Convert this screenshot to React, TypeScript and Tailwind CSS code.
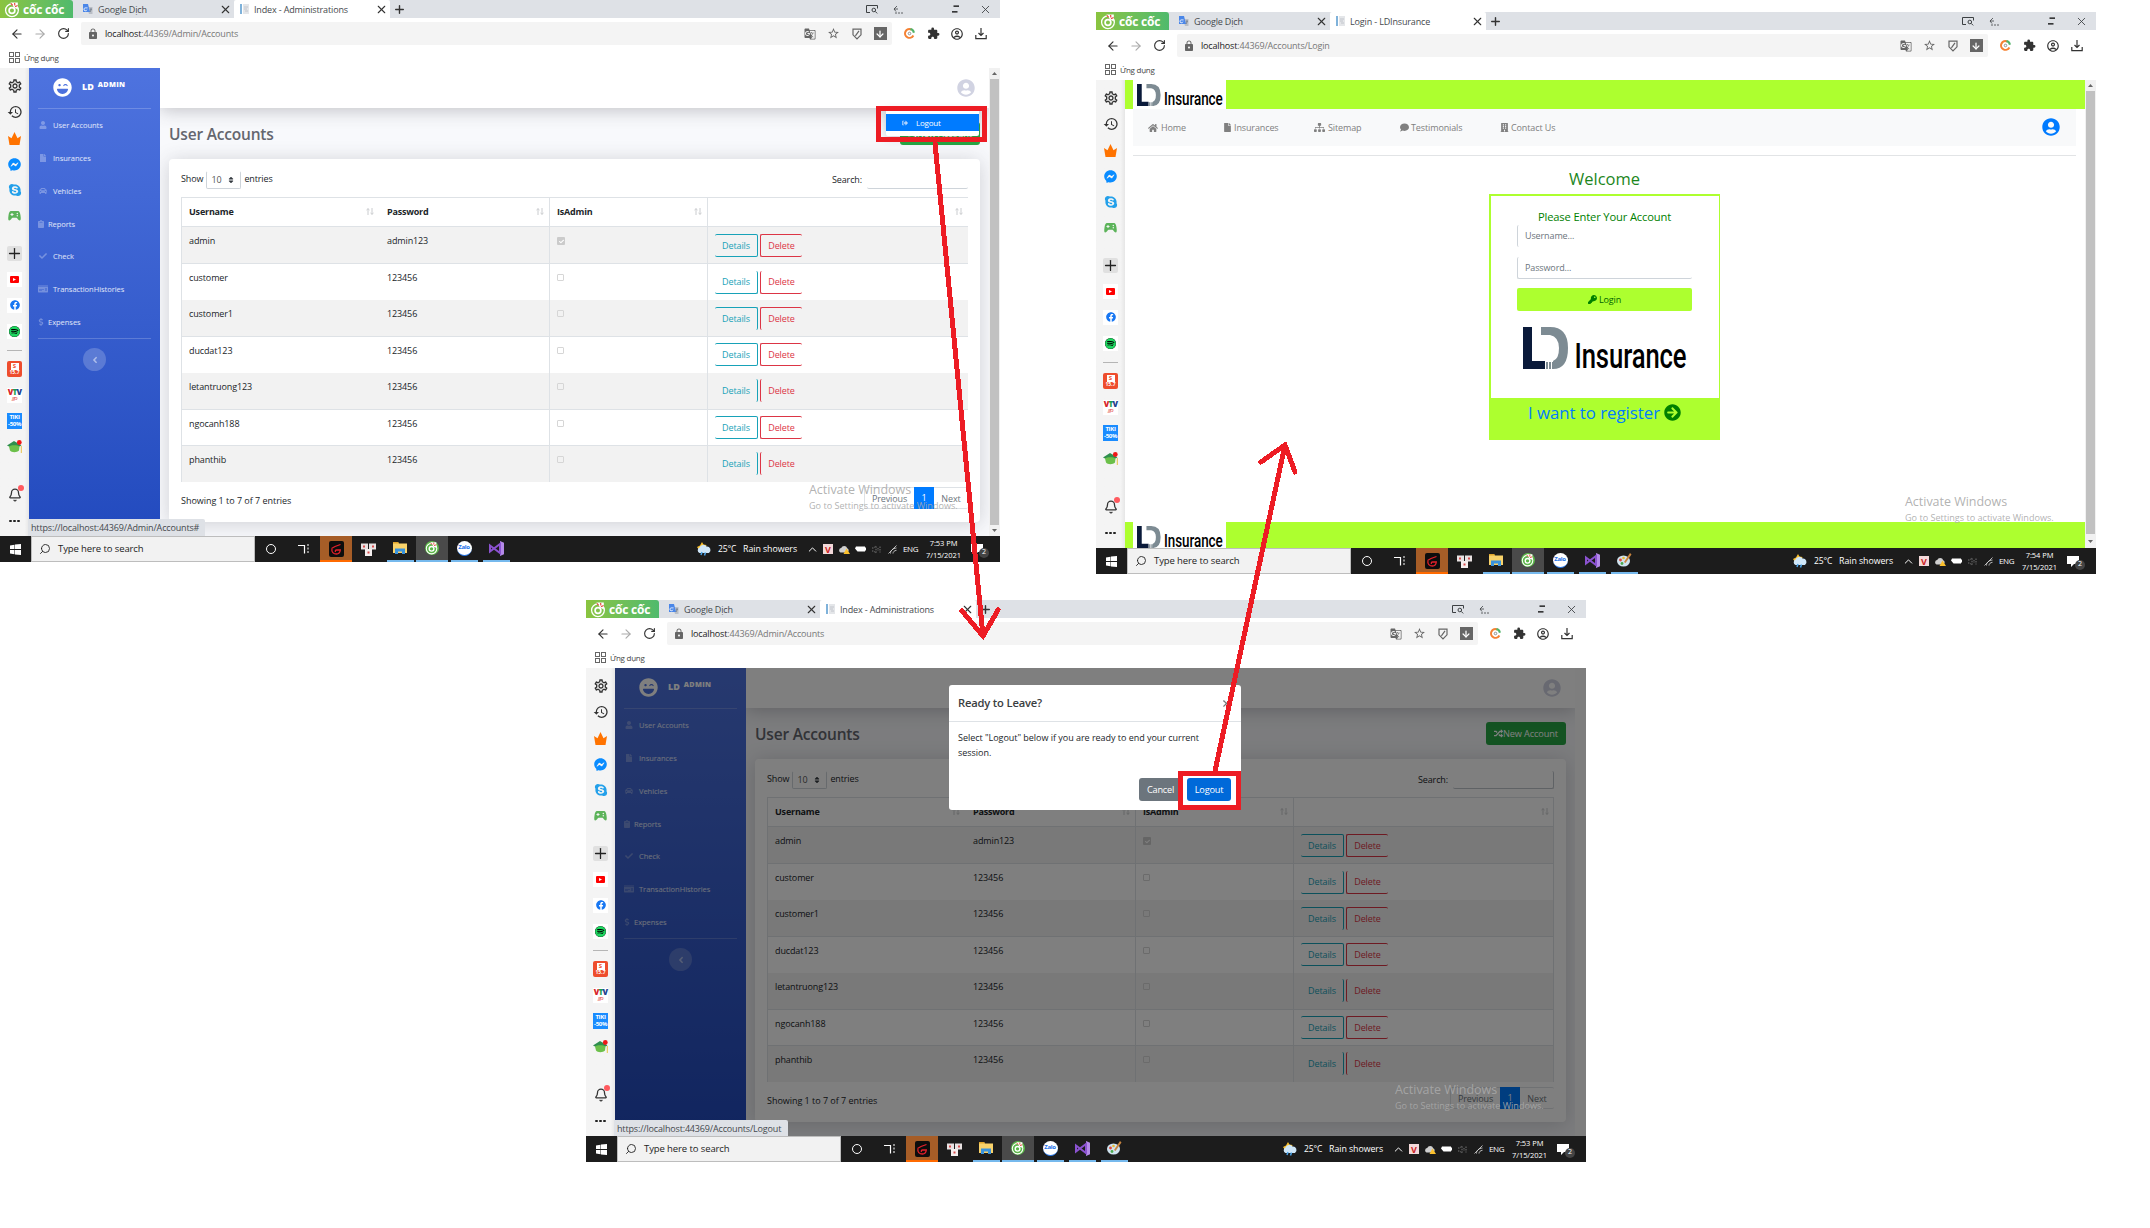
import React from 'react';
import {
  FaLaughWink, FaUser, FaFile, FaCar, FaClipboard, FaCheck, FaDollarSign, FaMoneyCheck, FaAngleLeft,
  FaUserCircle, FaSignOutAlt, FaHome, FaSitemap, FaComment, FaBuilding, FaKey, FaArrowCircleRight,
  FaRandom, FaSort, FaFacebook, FaFacebookMessenger, FaSkype, FaSpotify,
} from 'react-icons/fa';
import {
  MdOutlineSettings, MdHistory, MdLock, MdStarBorder, MdExtension, MdGTranslate, MdOutlineAccountCircle,
} from 'react-icons/md';
import { ArrowLeft, ArrowRight, RotateCw, Plus, X, Bell, Search, ArrowDown, ChevronUp } from 'lucide-react';

/* ---------- Browser chrome ---------- */

function CocCocMark({ size }: { size: number }) {
  return (
    <svg width={size} height={size} viewBox="0 0 16 16">
      <circle cx="7.5" cy="8.7" r="6" fill="none" stroke="#fff" strokeWidth="1.2" />
      <circle cx="7.5" cy="8.9" r="2.7" fill="none" stroke="#fff" strokeWidth="1.6" />
      <path d="M6 1.500h7V8L9.500 6z" fill="#fff" />
      <path d="M6.500 2.200l1.700 2M10 1.800l.2 2.400M12.800 4.200l-2.400 1.200" stroke="#e4483c" strokeWidth="1.1" />
    </svg>
  );
}

function TabBar({ title }: { title: string }) {
  return (
    <div className="flex h-[18px] bg-[#dee1e6] text-[9px] tracking-[-0.15px] text-[#45494d]">
      <div className="flex w-[73px] items-center rounded-tr-[3px] bg-gradient-to-r from-[#8ac43f] to-[#4fba6c] pl-[4px] text-white">
        <CocCocMark size={17} />
        <span className="ml-[2px] mt-[1px] text-[12px] font-bold leading-none tracking-[-0.2px] whitespace-nowrap">cốc cốc</span>
      </div>
      <div className="flex w-[161px] items-center pl-[10px]">
        <svg width="10" height="10" viewBox="0 0 10 10">
          <path d="M4 3h5.5v7H6z" fill="#b9bec6" />
          <path d="M0 0h5l2 8H0z" fill="#4a86e8" />
          <path d="M4.6 3.9H2.9a1.5 1.5 0 101 1.8" fill="none" stroke="#fff" strokeWidth=".8" />
          <path d="M7 5h2M8 5v1L7 8" stroke="#5f6b7a" strokeWidth=".7" fill="none" />
        </svg>
        <span className="mt-px ml-[5px]">Google Dịch</span>
        <X className="mr-[2px] ml-auto" size={13} strokeWidth={2} color="#333" />
      </div>
      <div className="flex w-[156px] items-center rounded-t-[2px] bg-white pl-[6px]">
        <svg width="9" height="10" viewBox="0 0 9 10">
          <path d="M0 0h2v10H0z" fill="#7fb2da" />
          <path d="M3 0h6v10H3z" fill="#e4e6e9" />
          <path d="M4 3h4M4 5h3M5 7h3" stroke="#b9bdc4" strokeWidth=".8" />
        </svg>
        <span className="mt-px ml-[5px]">{title}</span>
        <X className="mr-[2px] ml-auto" size={13} strokeWidth={2} color="#333" />
      </div>
      <div className="flex w-[18px] items-center justify-center"><Plus size={13} strokeWidth={2.6} color="#333" /></div>
      <div className="ml-auto flex text-[#3c4043]">
        <div className="flex w-[26px] items-center justify-center">
          <svg width="12" height="10" viewBox="0 0 12 10" fill="none" stroke="currentColor" strokeWidth="1">
            <path d="M4 8.5H.5v-7h11v3" /><circle cx="7.8" cy="6" r="1.8" /><path d="M9.2 7.4l2 2" />
          </svg>
        </div>
        <div className="flex w-[26px] items-center justify-center">
          <svg width="10" height="9" viewBox="0 0 10 9" fill="none" stroke="currentColor" strokeWidth=".8">
            <path d="M4 1L1 4l2 2.500M1 4h4" /><path d="M2 8h8" strokeDasharray="2 1" />
          </svg>
        </div>
        <div className="ml-[29px] flex w-[30px] items-center justify-center">
          <svg width="7" height="8" viewBox="0 0 7 8"><path d="M1.5 1.2H7M0 6.8h5.5" stroke="#000" strokeWidth="1.2" /></svg>
        </div>
        <div className="flex w-[30px] items-center justify-center"><X size={13} strokeWidth={1.6} /></div>
      </div>
    </div>
  );
}

function Toolbar({ path }: { path: string }) {
  return (
    <div className="flex h-[31px] items-center bg-white pl-[5px] text-[#333]">
      <div className="flex w-[23px] justify-center"><ArrowLeft size={14} strokeWidth={1.900} /></div>
      <div className="flex w-[23px] justify-center text-[#aaa]"><ArrowRight size={14} strokeWidth={1.900} /></div>
      <div className="flex w-[24px] justify-center"><RotateCw size={13} strokeWidth={2.1} /></div>
      <div className="ml-[6px] flex h-[23px] w-[811px] items-center rounded-[2px] bg-[#f4f4f4] pl-[6px] text-[#666]">
        <MdLock size={12} />
        <span className="ml-[6px] text-[9px] tracking-[-0.16px] text-[#777]"><span className="text-[#222]">localhost</span>:44369{path}</span>
        <div className="ml-auto flex items-center">
          <div className="flex w-[23.4px] justify-center"><MdGTranslate size={12} /></div>
          <div className="flex w-[23.4px] justify-center"><MdStarBorder size={13} /></div>
          <div className="flex w-[23.4px] justify-center">
            <svg width="10" height="12" viewBox="0 0 10 12" fill="none" stroke="currentColor" strokeWidth="1.2">
              <path d="M1 1.2h8v5.600L5 11 1 6.800zM3.400 7.800l3.600-5" />
            </svg>
          </div>
          <div className="flex w-[23.4px] justify-center">
            <div className="flex size-[13px] items-center justify-center bg-[#666] text-white"><ArrowDown size={10} strokeWidth={3} /></div>
          </div>
        </div>
      </div>
      <div className="ml-[5px] flex items-center">
        <div className="flex w-6 justify-center">
          <svg width="11" height="11" viewBox="0 0 12 12" fill="none" strokeWidth="2.200">
            <path d="M8 1.600A4.800 4.800 0 1 0 10.200 8.200" stroke="#f58233" />
            <path d="M7 1.200a4.800 4.800 0 0 1 3.800 4" stroke="#51b36a" />
            <circle cx="6" cy="6" r="1.400" stroke="#888" strokeWidth="1" />
          </svg>
        </div>
        <div className="flex w-6 justify-center"><MdExtension size={13} /></div>
        <div className="flex w-6 justify-center"><MdOutlineAccountCircle size={14} /></div>
        <div className="flex w-6 justify-center">
          <svg width="12" height="12" viewBox="0 0 12 12" fill="none" stroke="currentColor" strokeWidth="1.200"><path d="M6 0v7M3.500 5L6 7.500 8.500 5M.8 7v3.700h10.400V7" /></svg>
        </div>
      </div>
    </div>
  );
}

function Bookmarks() {
  return (
    <div className="flex h-[19px] items-center bg-white pb-[3px] pl-[9px]">
      <div className="grid grid-cols-2 gap-[1px]">
        <i className="size-[5px] border border-[#666]" /><i className="size-[5px] border border-[#666]" />
        <i className="size-[5px] border border-[#666]" /><i className="size-[5px] border border-[#666]" />
      </div>
      <span className="mt-px ml-[4px] text-[8px] tracking-[-0.25px] text-[#444]">Ứng dụng</span>
    </div>
  );
}

function Cell({ children }: { children: React.ReactNode }) {
  return <div className="flex h-[26px] w-[29px] shrink-0 items-center justify-center">{children}</div>;
}

function Tile({ children }: { children: React.ReactNode }) {
  return <div className="flex size-[15px] items-center justify-center bg-white">{children}</div>;
}

function AppStrip() {
  return (
    <div className="flex w-[29px] shrink-0 flex-col bg-gradient-to-r from-[#f4f4f4] from-85% to-[#e6e6e6] pt-[5px] text-[#333]">
      <Cell><MdOutlineSettings size={16} /></Cell>
      <Cell><MdHistory size={16} /></Cell>
      <Cell><svg width="13" height="13" viewBox="0 0 13 13"><path d="M0 4l3.500 2.200L6.500 0l3 6.200L13 4l-1.500 9h-10z" fill="#ff7300" /></svg></Cell>
      <Cell><FaFacebookMessenger size={13} color="#0a8cff" /></Cell>
      <Cell><FaSkype size={14} color="#23a0ea" /></Cell>
      <Cell>
        <svg width="13" height="10" viewBox="0 0 13 10">
          <path d="M3 0h7c1.400 0 2.100 1.600 2.500 4.400.5 3.500.4 5.100-.9 5.100S9.400 7 8.500 6.800h-4C3.600 7 2.700 9.500 1.400 9.500S0 7.900.5 4.400C.9 1.600 1.600 0 3 0z" fill="#5cb35a" />
          <path d="M2.500 3.500h3M4 2v3" stroke="#f4f4f4" /><circle cx="9.300" cy="2.500" r=".7" fill="#f4f4f4" /><circle cx="9.300" cy="4.800" r=".7" fill="#f4f4f4" />
        </svg>
      </Cell>
      <div className="h-[11px]" />
      <Cell><div className="flex size-[15px] items-center justify-center rounded-[2px] bg-[#e0e0e0]"><Plus className="shrink-0" size={17} strokeWidth={1.800} color="#222" /></div></Cell>
      <Cell><Tile><div className="flex h-[7px] w-[9px] items-center justify-center rounded-[1px] bg-[#f00]"><svg width="3" height="3" viewBox="0 0 3 3"><path d="M0 0l3 1.500L0 3z" fill="#fff" /></svg></div></Tile></Cell>
      <Cell><Tile><FaFacebook size={10} color="#1877f2" /></Tile></Cell>
      <Cell><Tile><div className="rounded-full bg-black"><FaSpotify size={11} color="#1ed760" /></div></Tile></Cell>
      <div className="mx-[7px] mt-[6px] mb-[5px] h-px shrink-0 bg-[#b5b5b5]" />
      <Cell>
        <div className="flex h-[16px] w-[15px] flex-col items-center justify-center rounded-[2px] bg-[#ee4d2d] text-white">
          <div className="flex h-[7px] w-[8px] items-center justify-center bg-white text-[6px] font-bold text-[#ee4d2d]">S</div>
          <span className="text-[5px] leading-[5px] font-bold">15.7</span>
        </div>
      </Cell>
      <Cell>
        <div className="flex h-[15px] w-[15px] flex-col items-center bg-white text-[8px] leading-[8px] font-black tracking-[-0.8px]">
          <span><b className="text-[#d8232a]">V</b><b className="text-[#1f9d4d]">T</b><b className="text-[#25408f]">V</b></span>
          <span className="text-[6px] leading-[5px] font-normal text-[#e0322d] italic">go</span>
        </div>
      </Cell>
      <Cell>
        <div className="flex h-[16px] w-[15px] flex-col items-center justify-center overflow-hidden bg-[#1a8cff] text-[6px] leading-[7px] font-bold tracking-[-0.3px] text-white">
          <span>TIKI</span><span>-50%</span>
        </div>
      </Cell>
      <Cell>
        <svg width="15" height="14" viewBox="0 0 15 14">
          <path d="M0 5.500L7 1l7.500 4.500L7 9z" fill="#2f8f4e" /><path d="M2 6.500c2-1.800 8.500-1.800 10.500 0L12 10.500c-2 2.200-7.500 2.200-9 0z" fill="#6cc04a" />
          <path d="M14.300 6v7" stroke="#e8c34a" /><circle cx="12.300" cy="2.500" r="2.400" fill="#f01818" />
        </svg>
      </Cell>
      <div className="h-[22px]" />
      <div className="relative"><Cell><Bell size={14} strokeWidth={2.2} /></Cell><i className="absolute top-[3px] left-[18px] size-[6px] rounded-full bg-[#ff5a5f]" /></div>
      <Cell><div className="flex gap-[1.500px]"><i className="size-[2.500px] rounded-full bg-[#222]" /><i className="size-[2.500px] rounded-full bg-[#222]" /><i className="size-[2.500px] rounded-full bg-[#222]" /></div></Cell>
    </div>
  );
}

function Scrollbar({ endClass }: { endClass: string }) {
  return (
    <div className="flex w-[11px] shrink-0 flex-col items-center bg-[#f1f1f1]">
      <div className="flex h-[11px] items-center"><svg width="5" height="3" viewBox="0 0 5 3"><path d="M0 3l2.500-3L5 3z" fill="#666" /></svg></div>
      <div className="w-[9px] flex-1 bg-[#c1c1c1]" />
      <div className={endClass}><svg width="5" height="3" viewBox="0 0 5 3"><path d="M0 0l2.500 3L5 0z" fill="#666" /></svg></div>
    </div>
  );
}

/* ---------- Windows taskbar ---------- */

function TaskIcon({ line, children }: { line?: boolean; children: React.ReactNode }) {
  return (
    <div className="flex h-full w-8 flex-col items-center">
      <div className="flex flex-1 items-center">{children}</div>
      {line && <div className="h-[2px] w-[27px] bg-[#76b9ed]" />}
    </div>
  );
}

function Tray({ children }: { children: React.ReactNode }) {
  return <div className="flex w-4 items-center justify-center">{children}</div>;
}

function Taskbar({ time, paint }: { time: string; paint: boolean }) {
  return (
    <div className="flex h-[26px] items-center bg-[#1c1c1c] text-white">
      <div className="flex w-[31px] justify-center">
        <svg width="11" height="11" viewBox="0 0 11 11"><path d="M0 1.500l4.500-.8v4.400H0zM5 .6L11 0v5.100H5zM0 6h4.500v4.300L0 9.600zM5 6h6v5l-6-.6z" fill="#fff" /></svg>
      </div>
      <div className="flex h-[26px] w-[224px] items-center border border-[#bdbdbd] bg-[#f2f2f2] pl-[7px] text-[#222]">
        <Search className="-scale-x-100" size={12} strokeWidth={1.800} />
        <span className="ml-[7px] text-[9.500px] tracking-[-0.100px]">Type here to search</span>
      </div>
      <TaskIcon><div className="size-[10px] rounded-full border-[1.500px] border-white" /></TaskIcon>
      <TaskIcon>
        <svg width="11" height="10" viewBox="0 0 11 10"><path d="M0 1.500h6.500v8" stroke="#fff" strokeWidth="1.200" fill="none" /><path d="M10 0v10" stroke="#fff" strokeDasharray="2 1.500" /></svg>
      </TaskIcon>
      <div className="ml-px flex h-full w-8 flex-col items-center border-b-2 border-[#ff6a00] bg-[#a65d27] pt-[5px]">
        <div className="flex h-[16px] w-[15px] items-center justify-center rounded-[2px] bg-[#0d0d0d]">
          <svg width="12" height="12" viewBox="0 0 12 12" fill="none" stroke="#e5202b" strokeWidth="1.300"><path d="M10.500 1.500L5 3.500 1.500 5.500M2 6c-.8 3 1.500 5 4.500 5 2.500 0 3.500-1.500 3.800-4H6.500c-1 0-1.500 1-1 2" /></svg>
        </div>
      </div>
      <TaskIcon>
        <svg width="15" height="13" viewBox="0 0 15 13"><rect width="7" height="6" y=".5" fill="#e8e2e2" /><rect x="8" width="7" height="6" y=".5" fill="#e8e2e2" /><rect x="4" y="6" width="7" height="7" fill="#f5efef" /><path d="M2 2.500h2v2H2zM11 2.500h2v2h-2zM6.500 8.500h2v2h-2z" fill="#d84c4c" /></svg>
      </TaskIcon>
      <TaskIcon line>
        <svg width="14" height="12" viewBox="0 0 14 12"><path d="M0 0h5l1 1.500h8V11H0z" fill="#f8d26a" /><path d="M0 0h5l1 1.500H0z" fill="#e0a52c" /><path d="M2 6.500h10V12H9V9.500H5V12H2z" fill="#3a93dd" /></svg>
      </TaskIcon>
      <div className="flex h-full w-8 flex-col items-center border-b-2 border-[#76b9ed] bg-[#4a4a4a] pt-[5px]">
        <div className="rounded-full bg-[#5cb749]"><CocCocMark size={14} /></div>
      </div>
      <TaskIcon line><div className="flex size-[15px] items-center justify-center rounded-full border-b border-[#1a6fe8] bg-white text-[6px] font-bold tracking-[-0.300px] text-[#1a6fe8]">Zalo</div></TaskIcon>
      <TaskIcon line>
        <svg width="15" height="15" viewBox="0 0 15 15"><path d="M11 0l4 1.700v11.600L11 15z" fill="#b48ae8" /><path d="M1 4.500l10 7.500V3L1 10.500z" fill="none" stroke="#8b52d0" strokeWidth="2" /></svg>
      </TaskIcon>
      {paint && (
        <TaskIcon line>
          <svg width="15" height="14" viewBox="0 0 15 14"><ellipse cx="6.500" cy="8" rx="6.500" ry="5.500" fill="#cfe3ef" /><circle cx="3.500" cy="7" r="1.400" fill="#e0483a" /><circle cx="6.500" cy="5" r="1.300" fill="#e8b92f" /><circle cx="5" cy="10.500" r="1.400" fill="#4ba94e" /><path d="M13 0l1.500 1.500L8.500 10 7 9z" fill="#c9853f" /></svg>
        </TaskIcon>
      )}
      <div className="ml-auto flex items-center">
        <svg className="mr-[6px]" width="15" height="14" viewBox="0 0 15 14"><path d="M5 0l1.400 2.600L9.500 3 8 8H2L0 5l3-1.500z" fill="#fbc02d" /><path d="M2.500 11a3 3 0 010-5.500 4 4 0 017-1A3.600 3.600 0 0112 11z" fill="#cfe6f8" /><path d="M5 10l-1 3M8.500 10.500l-1 3" stroke="#4aa3e8" strokeWidth="1.500" /></svg>
        <span className="mt-px w-[25px] text-[8.500px] tracking-[-0.100px]">25°C</span>
        <span className="mt-px w-[61px] text-[8.800px] tracking-[-0.050px] whitespace-nowrap">Rain showers</span>
        <Tray><ChevronUp size={13} strokeWidth={1.800} /></Tray>
        <Tray><div className="flex size-[10px] items-center justify-center bg-[#f3d9d9] text-[9px] leading-none font-bold text-[#c22]">V</div></Tray>
        <Tray><svg width="11" height="9" viewBox="0 0 11 9"><path d="M1.500 7.500a2.300 2.300 0 01.7-4.400 3.200 3.200 0 016 .2A2.200 2.200 0 018 7.500z" fill="#cfcfcf" /><path d="M7.500 3.500L11 9H4.500z" fill="#fbc02d" /></svg></Tray>
        <Tray><svg width="11" height="6" viewBox="0 0 11 6"><path d="M1 .5h9v1h1v3h-1v1H2.500L0 2.500z" fill="#fff" /></svg></Tray>
        <Tray><svg width="9" height="9" viewBox="0 0 9 9" fill="none" stroke="#8a8a8a" strokeWidth=".8"><path d="M0 3h1.500L4 1v7L1.500 6H0M6 3v3M8 1.500v6" strokeDasharray="1.500 1" /></svg></Tray>
        <Tray><svg width="9" height="9" viewBox="0 0 9 9" fill="none" stroke="#ddd" strokeWidth=".8"><path d="M.5 8.500L8.500 .5M2.500 8.500c0-3 2-5 6-5.500M5 8.500c0-1.500 1.200-3 3.500-3.200" /></svg></Tray>
        <span className="ml-[3px] w-[18px] text-[8px] tracking-[-0.400px]">ENG</span>
        <span className="w-[45px] text-center text-[7.500px] leading-[12px] tracking-[-0.050px] whitespace-nowrap">{time}<br />7/15/2021</span>
        <div className="relative mr-[7px] flex w-[27px] justify-center">
          <svg className="-ml-[5px]" width="12" height="11" viewBox="0 0 12 11"><path d="M0 0h12v8H7l-3 3V8H0z" fill="#fff" /></svg>
          <span className="absolute top-[4px] left-[13px] flex size-[10px] items-center justify-center rounded-full bg-[#444] text-[7px]">2</span>
        </div>
      </div>
    </div>
  );
}

function BrowserWindow({ className, title, path, time, paint, children }: {
  className: string; title: string; path: string; time: string; paint: boolean; children: React.ReactNode;
}) {
  return (
    <section className={className}>
      <TabBar title={title} />
      <Toolbar path={path} />
      <Bookmarks />
      <div className="flex h-[468px]">
        <AppStrip />
        {children}
      </div>
      <Taskbar time={time} paint={paint} />
      <div className="absolute top-[480px] left-[809px] whitespace-nowrap text-[#a9a9a9]/90">
        <p className="text-[12.500px] leading-[19px] tracking-[-0.030px]">Activate Windows</p>
        <p className="text-[9.100px] leading-[13px] tracking-[-0.010px]">Go to Settings to activate Windows.</p>
      </div>
    </section>
  );
}

/* ---------- Admin page ---------- */

function NavItem({ icon, label, tight }: { icon: React.ReactNode; label: string; tight?: boolean }) {
  return (
    <div className={tight ? 'flex h-[32.750px] items-center pl-[9px]' : 'flex h-[32.750px] items-center pl-[10px]'}>
      <span className={tight ? 'flex w-[6px] justify-center text-white/30' : 'flex w-[8px] justify-center text-white/30'}>{icon}</span>
      <span className={tight ? 'mt-px ml-[4px]' : 'mt-px ml-[6px]'}>{label}</span>
    </div>
  );
}

function AdminSidebar() {
  return (
    <div className="flex w-[131px] shrink-0 flex-col bg-gradient-to-b from-[#4e73df] to-[#224abe] text-[7.500px] tracking-[-0.030px] text-white/85">
      <div className="flex h-[40px] items-center pb-[2px] pl-[24px] text-white">
        <FaLaughWink size={19} />
        <span className="ml-[10px] text-[9px] font-extrabold">LD</span>
        <span className="mb-[5px] ml-[4px] text-[7.200px] font-extrabold tracking-[0.300px]">ADMIN</span>
      </div>
      <div className="mx-[9px] h-px bg-white/20" />
      <NavItem icon={<FaUser size={8} />} label="User Accounts" />
      <NavItem icon={<FaFile size={8} />} label="Insurances" />
      <NavItem icon={<FaCar size={8} />} label="Vehicles" />
      <NavItem icon={<FaClipboard size={8} />} label="Reports" tight />
      <NavItem icon={<FaCheck size={8} />} label="Check" />
      <NavItem icon={<FaMoneyCheck className="shrink-0" size={10} />} label="TransactionHistories" />
      <NavItem icon={<FaDollarSign size={8} />} label="Expenses" tight />
      <div className="mx-[9px] h-px bg-white/20" />
      <div className="mx-auto mt-[9px] flex size-[23px] items-center justify-center rounded-full bg-white/20 text-white/50"><FaAngleLeft size={10} /></div>
    </div>
  );
}

type Edge = 'both' | 'top' | 'bottom' | 'none';
const users: { name: string; pw: string; admin?: boolean; edge: Edge; line: boolean }[] = [
  { name: 'admin', pw: 'admin123', admin: true, edge: 'both', line: true },
  { name: 'customer', pw: '123456', edge: 'bottom', line: false },
  { name: 'customer1', pw: '123456', edge: 'top', line: true },
  { name: 'ducdat123', pw: '123456', edge: 'both', line: false },
  { name: 'letantruong123', pw: '123456', edge: 'none', line: true },
  { name: 'ngocanh188', pw: '123456', edge: 'both', line: true },
  { name: 'phanthib', pw: '123456', edge: 'none', line: false },
];
const edges: Record<Edge, string> = { both: 'border-y', top: 'border-t', bottom: 'border-b', none: '' };

function SortMark() {
  return (
    <svg className="mr-[5px] mb-[2px] ml-auto" width="8" height="7" viewBox="0 0 8 7" fill="none" stroke="#c4c6ca" strokeWidth=".9">
      <path d="M2 7V.8M.5 2L2 .6 3.500 2M6 0v6.200M4.500 5L6 6.400 7.500 5" />
    </svg>
  );
}

function AccountsTable({ closed }: { closed: boolean }) {
  const cols = 'grid grid-cols-[198px_170px_158px_261px]';
  return (
    <div className={closed ? 'h-[285px] w-[787px] border-r border-[#dee2e6]' : 'h-[285px] w-[787px]'}>
      <div className={cols + ' h-[30px] border-y border-[#dee2e6] text-[9px] font-bold tracking-[-0.200px] text-[#212529]'}>
        <div className="flex items-center border-l border-[#dee2e6] pl-[7px]">Username<SortMark /></div>
        <div className="flex items-center pl-[8px]">Password<SortMark /></div>
        <div className="flex items-center border-l border-[#dee2e6] pl-[7px]">IsAdmin<SortMark /></div>
        <div className="flex items-center border-l border-[#dee2e6] pl-[8px]"><SortMark /></div>
      </div>
      {users.map((u, i) => (
        <div key={u.name} className={cols + (u.line ? ' border-b border-[#dee2e6]' : '') + (i % 2 === 0 ? ' bg-[#f2f2f2]' : '') + (i === 0 || i === 2 || i === 4 ? ' h-[37px]' : ' h-[36px]')}>
          <div className="border-l border-[#dee2e6] pt-[7px] pl-[7px] leading-[14px]">{u.name}</div>
          <div className="pt-[7px] pl-[8px] leading-[14px]">{u.pw}</div>
          <div className="border-l border-[#dee2e6] pt-[10px] pl-[7px]">
            <div className={u.admin ? 'flex size-[8px] items-center justify-center rounded-[1px] bg-[#cbcbcb] text-white' : 'size-[7px] rounded-[1px] border border-[#d6d6d6]'}>
              {u.admin && <FaCheck size={5} />}
            </div>
          </div>
          <div className={'flex gap-[2px] border-l border-[#dee2e6] pl-[7px] ' + (i < 3 ? 'pt-[7px]' : 'pt-[6px]')}>
            <div className={'flex h-[23px] w-[43px] items-center justify-center rounded-[2px] border-r border-[#17a2b8] text-[#17a2b8] ' + edges[u.edge]}>Details</div>
            <div className={'flex h-[23px] w-[42px] items-center justify-center rounded-[2px] border-l border-[#dc3545] text-[#dc3545] ' + edges[u.edge]}>Delete</div>
          </div>
        </div>
      ))}
    </div>
  );
}

function AdminPage({ modal }: { modal: boolean }) {
  return (
    <div className="relative flex flex-1 overflow-hidden">
      <AdminSidebar />
      <div className="flex w-[829px] flex-col overflow-hidden bg-[#f8f9fc] text-[9px] tracking-[-0.120px] text-[#212529]">
        <div className="relative flex h-[40px] shrink-0 items-center justify-end bg-white pr-[14px] shadow-[0_2px_18px_rgba(58,59,69,0.3)]">
          <FaUserCircle className="mb-px" size={18} color="#d1d3e2" />
          {!modal && (
            <div className="absolute top-[41px] right-[10px] h-[27px] w-[93px] rounded-[2px] bg-white pt-[5px] shadow-[0_2px_8px_rgba(58,59,69,0.25)]">
              <div className="flex h-[17px] items-center bg-[#007bff] pl-[16px] text-[8px] tracking-[-0.200px] text-white">
                <FaSignOutAlt size={6} color="#b8d8ff" /><span className="ml-[8px]">Logout</span>
              </div>
            </div>
          )}
        </div>
        <div className="flex h-[51px] items-start justify-between pr-[9px] pl-[9px]">
          <h1 className="mt-[14px] text-[15.500px] leading-[24px] font-semibold tracking-[-0.200px] text-[#64666f]">User Accounts</h1>
          <div className="mt-[14px] flex h-[23px] w-[80px] items-center justify-center rounded-[3px] bg-[#28a745] text-[9.200px] text-white"><FaRandom size={9} />New Account</div>
        </div>
        <div className="mx-[9px] h-[363px] shrink-0 rounded-[4px] bg-white px-[12px] pt-[12px] shadow-[0_2px_20px_rgba(58,59,69,0.22)]">
          <div className="flex h-[26px] items-start leading-[16px]">
            <span>Show</span>
            <div className="ml-[3px] flex h-[18px] w-[35px] items-center rounded-[2px] border border-t-transparent border-[#ced4da] pl-[4px] text-[#555]">10<FaSort className="ml-auto mr-[5px]" size={8} color="#343a40" /></div>
            <span className="ml-[3px]">entries</span>
            <span className="mt-px ml-auto">Search:</span>
            <div className={modal ? 'ml-[5px] h-[18px] w-[101px] rounded-[2px] border-r border-b border-[#bfc5cb]' : 'ml-[5px] h-[18px] w-[101px] rounded-[2px] border-b border-[#ced4da]'} />
          </div>
          <AccountsTable closed={modal} />
          <div className="flex items-start justify-between">
            <span className="mt-[11px] leading-[16px] tracking-[-0.030px]">Showing 1 to 7 of 7 entries</span>
            <div className="mt-[5px] flex h-[22px] items-center rounded-[2px] border border-r-0 border-[#dee2e6] text-[#6c757d]">
              <span className="mt-px w-[49px] text-center">Previous</span>
              <span className="-my-px flex h-[22px] w-[20px] items-center justify-center bg-[#007bff] text-white">1</span>
              <span className="mt-px w-[34px] text-center">Next</span>
            </div>
          </div>
        </div>
      </div>
      {modal ? <div className="w-[11px] shrink-0 bg-[#fdfdfd]" /> : <Scrollbar endClass="flex h-[11px] items-center" />}
      {modal && (
        <div className="absolute inset-0 flex justify-center bg-black/50 pt-[17px] pr-[11px]">
          <div className="flex h-[125px] w-[292px] flex-col rounded-[3px] bg-white text-[#212529]">
            <div className="flex h-[37px] items-center justify-between border-b border-[#dee2e6] px-[9px]">
              <h2 className="mt-px text-[11.200px] font-semibold tracking-[-0.180px] text-[#3a3d41]">Ready to Leave?</h2>
              <X size={11} strokeWidth={2.500} color="#777" />
            </div>
            <p className="px-[9px] pt-[8px] text-[9px] leading-[15px] tracking-[-0.030px]">Select &quot;Logout&quot; below if you are ready to end your current<br />session.</p>
            <div className="mt-auto mb-[9px] flex justify-end gap-[5px] pr-[10px] text-[9.200px] tracking-[-0.200px] text-white">
              <div className="flex h-[23px] w-[43px] items-center justify-center rounded-[3px] bg-[#6c757d]">Cancel</div>
              <div className="flex h-[23px] w-[44px] items-center justify-center rounded-[3px] bg-[#0069d9]">Logout</div>
            </div>
          </div>
        </div>
      )}
    </div>
  );
}

function StatusBubble({ className, text }: { className: string; text: string }) {
  return <div className={className}>{text}</div>;
}

/* ---------- Login page ---------- */

function Logo({ width }: { width: number }) {
  return (
    <svg width={width} height={(width * 42) / 164} viewBox="0 0 164 42">
      <path d="M0 0h9v34h13v8H0z" fill="#0a1a3a" />
      <path d="M18 0h9q18 0 18 21t-15 21v-8q6-2 6-13t-9-13h-9z" fill="#7d8b93" />
      <path d="M23 35h2v7h-2zM26 35h2v7h-2zM29 35h2v7h-2z" fill="#7d8b93" />
      <text x="51.500" y="40.500" fontFamily="Roboto" fontWeight="500" fontSize="35" textLength="112" lengthAdjust="spacingAndGlyphs" fill="#000">Insurance</text>
    </svg>
  );
}

function LoginPage() {
  return (
    <>
      <div className="flex w-[960px] flex-col text-[9px] tracking-[-0.120px]">
        <div className="h-[29px] shrink-0 bg-[#adff2f] pl-[8px]"><div className="h-[29px] w-[93px] bg-white pt-[4px] pl-[4px]"><Logo width={86} /></div></div>
        <div className="mr-[9px] ml-[8px] flex h-[37px] shrink-0 items-center bg-[#f8f9fa] pl-[15px] text-[#808080]">
          <span className="flex w-[75px] items-center gap-[3px]"><FaHome size={10} />Home</span>
          <span className="flex w-[91px] items-center gap-[2px]"><FaFile size={9} />Insurances</span>
          <span className="flex w-[86px] items-center gap-[3px]"><FaSitemap size={11} />Sitemap</span>
          <span className="flex w-[100px] items-center gap-[2px]"><FaComment size={9} />Testimonials</span>
          <span className="flex items-center gap-[2px]"><FaBuilding size={9} />Contact Us</span>
          <FaUserCircle className="mr-[16px] mb-[2px] ml-auto" size={18} color="#007bff" />
        </div>
        <div className="mt-[9px] mr-[9px] ml-[8px] h-px shrink-0 bg-[#e2e4e6]" />
        <div className="ml-[364px] flex w-[231px] shrink-0 flex-col text-center">
          <h1 className="mt-[11px] h-[27px] text-[16.500px] leading-[24px] tracking-[-0.020px] text-[#1c861c]">Welcome</h1>
          <div className="flex h-[204px] flex-col border-t-2 border-r border-l-2 border-[#adff2f] pr-[27px] pl-[26px]">
            <h2 className="mt-[12px] text-[11.200px] leading-[17px] tracking-[-0.150px] text-[#008000]">Please Enter Your Account</h2>
            <div className="flex h-[22px] items-center rounded-[2px] border-l border-[#ced4da] pl-[7px] text-[#6c757d]">Username...</div>
            <div className="mt-[10px] flex h-[22px] items-center rounded-[2px] border-b border-l border-[#ced4da] pl-[7px] text-[#6c757d]">Password...</div>
            <div className="mt-[9px] flex h-[23px] items-center justify-center gap-[2px] rounded-[2px] bg-[#adff2f] text-[#006400]"><FaKey size={9} color="#008000" />Login</div>
            <div className="mt-[16px] pl-[6px]"><Logo width={164} /></div>
          </div>
          <div className="flex h-[42px] items-start justify-center gap-[4px] bg-[#adff2f] pt-[3px] text-[16.800px] leading-[24px] tracking-[-0.020px] text-[#007bff]">I want to register <FaArrowCircleRight className="mt-[3px]" size={17} color="#008000" /></div>
        </div>
        <div className="mt-auto h-[26px] shrink-0 overflow-hidden bg-[#adff2f] pl-[8px]"><div className="h-[26px] w-[93px] bg-white pt-[4px] pl-[4px]"><Logo width={86} /></div></div>
      </div>
      <Scrollbar endClass="flex h-[14px] items-center" />
    </>
  );
}

/* ---------- Board with annotations ---------- */

export default function App() {
  return (
    <main className="relative h-[1228px] w-[2150px] overflow-hidden bg-white font-['Open_Sans','Noto_Sans',sans-serif]">
      <BrowserWindow className="absolute top-0 left-0 h-[562px] w-[1000px]" title="Index - Administrations" path="/Admin/Accounts" time="7:53 PM" paint={false}>
        <AdminPage modal={false} />
        <StatusBubble className="absolute top-[519px] left-[28px] flex h-[17px] w-[177px] items-center rounded-tr-[2px] bg-[#dee1e6] pt-px pl-[3px] text-[9px] tracking-[-0.160px] text-[#45494d]" text="https://localhost:44369/Admin/Accounts#" />
      </BrowserWindow>
      <BrowserWindow className="absolute top-[12px] left-[1096px] h-[562px] w-[1000px]" title="Login - LDInsurance" path="/Accounts/Login" time="7:54 PM" paint>
        <LoginPage />
      </BrowserWindow>
      <BrowserWindow className="absolute top-[600px] left-[586px] h-[562px] w-[1000px]" title="Index - Administrations" path="/Admin/Accounts" time="7:53 PM" paint>
        <AdminPage modal />
        <StatusBubble className="absolute top-[520px] left-[28px] flex h-[16px] w-[174px] items-center rounded-tr-[2px] bg-[#dee1e6] pt-px pl-[3px] text-[9px] tracking-[-0.160px] text-[#45494d]" text="https://localhost:44369/Accounts/Logout" />
      </BrowserWindow>

      <div className="absolute top-[106px] left-[876px] h-[36px] w-[111px] border-[5px] border-[#ed1c24]" />
      <div className="absolute top-[771px] left-[1178px] h-[39px] w-[63px] border-[5px] border-[#ed1c24]" />
      <svg className="absolute inset-0" width="2150" height="1228" fill="none" stroke="#ed1c24" strokeWidth="5" strokeLinecap="round" shapeRendering="crispEdges">
        <path d="M935 143L983 636M962 611L983 636L998 610" />
        <path d="M1215 771L1285 445M1261 462L1285 445L1295 472" />
      </svg>
    </main>
  );
}
